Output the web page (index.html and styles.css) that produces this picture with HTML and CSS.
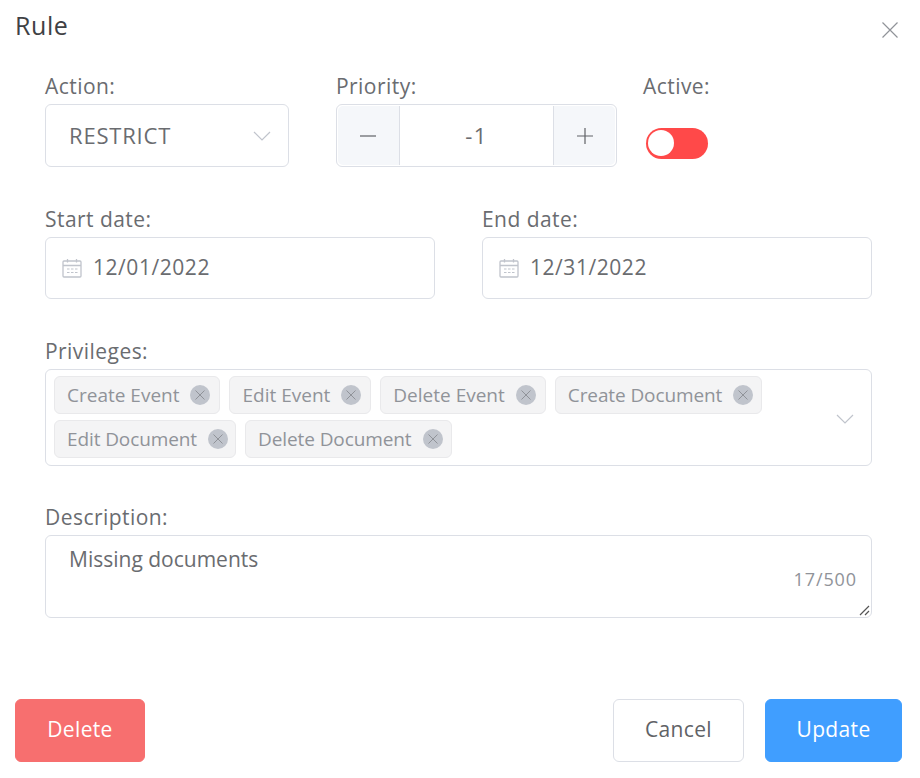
FILE: index.html
```html
<!DOCTYPE html>
<html lang="en">
<head>
<meta charset="utf-8">
<title>Rule</title>
<link rel="stylesheet" href="styles.css">
</head>
<body>
<div class="dialog">
  <header class="dialog-header">
    <span class="dialog-title">Rule</span>
    <button class="close" type="button" aria-label="Close">
      <svg viewBox="0 0 16 16" width="16" height="16"><path d="M.5.5l15 15M15.500.5l-15 15" fill="none" stroke="#909399" stroke-width="1.200"/></svg>
    </button>
  </header>
  <form class="form">
    <div class="row row-top">
      <div class="field action">
        <label class="label">Action:</label>
        <div class="control select">
          <span class="select-value">RESTRICT</span>
          <svg class="chev" viewBox="0 0 18 10" width="18" height="10"><path d="M1 1l8 8 8-8" fill="none" stroke="#c0c4cc" stroke-width="1.200"/></svg>
        </div>
      </div>
      <div class="field priority">
        <label class="label">Priority:</label>
        <div class="control number">
          <span class="step step-l"><svg viewBox="0 0 16 16" width="16" height="16"><path d="M0 8h16" stroke="#606266" stroke-width="1.200"/></svg></span>
          <span class="num">-1</span>
          <span class="step step-r"><svg viewBox="0 0 16 16" width="16" height="16"><path d="M0 8h16M8 0v16" stroke="#606266" stroke-width="1.200"/></svg></span>
        </div>
      </div>
      <div class="field active">
        <label class="label">Active:</label>
        <div class="switch"><span class="knob"></span></div>
      </div>
    </div>
    <div class="row row-dates">
      <div class="field date">
        <label class="label">Start date:</label>
        <div class="control dateinput">
          <svg class="cal" viewBox="0 0 20 20" width="20" height="20"><g fill="none" stroke="#c0c4cc" stroke-width="1.300"><rect x="1" y="3" width="18" height="16" rx="1"/><path d="M1 7.500h18M5.500 1v3.500M14.500 1v3.500"/><path d="M5 11h2.500M9 11h2.500M13 11h2.500M5 14.500h2.500M9 14.500h2.500M13 14.500h2.500" stroke-width="1.100"/></g></svg>
          <span class="date-value">12/01/2022</span>
        </div>
      </div>
      <div class="field date">
        <label class="label">End date:</label>
        <div class="control dateinput">
          <svg class="cal" viewBox="0 0 20 20" width="20" height="20"><g fill="none" stroke="#c0c4cc" stroke-width="1.300"><rect x="1" y="3" width="18" height="16" rx="1"/><path d="M1 7.500h18M5.500 1v3.500M14.500 1v3.500"/><path d="M5 11h2.500M9 11h2.500M13 11h2.500M5 14.500h2.500M9 14.500h2.500M13 14.500h2.500" stroke-width="1.100"/></g></svg>
          <span class="date-value">12/31/2022</span>
        </div>
      </div>
    </div>
    <div class="field block privileges">
      <label class="label">Privileges:</label>
      <div class="control tags">
        <div class="tag-list">
          <span class="tag">Create Event<i class="x"><svg viewBox="0 0 10 10" width="10" height="10"><path d="M.5.500l9 9M9.500.5l-9 9" stroke="#909399" stroke-width="1"/></svg></i></span>
          <span class="tag">Edit Event<i class="x"><svg viewBox="0 0 10 10" width="10" height="10"><path d="M.5.500l9 9M9.500.5l-9 9" stroke="#909399" stroke-width="1"/></svg></i></span>
          <span class="tag">Delete Event<i class="x"><svg viewBox="0 0 10 10" width="10" height="10"><path d="M.5.500l9 9M9.500.5l-9 9" stroke="#909399" stroke-width="1"/></svg></i></span>
          <span class="tag tag-doc">Create Document<i class="x"><svg viewBox="0 0 10 10" width="10" height="10"><path d="M.5.500l9 9M9.500.5l-9 9" stroke="#909399" stroke-width="1"/></svg></i></span>
          <span class="tag tag-doc tag-narrow">Edit Document<i class="x"><svg viewBox="0 0 10 10" width="10" height="10"><path d="M.5.500l9 9M9.500.5l-9 9" stroke="#909399" stroke-width="1"/></svg></i></span>
          <span class="tag tag-doc">Delete Document<i class="x"><svg viewBox="0 0 10 10" width="10" height="10"><path d="M.5.500l9 9M9.500.5l-9 9" stroke="#909399" stroke-width="1"/></svg></i></span>
        </div>
        <svg class="chev chev-tags" viewBox="0 0 18 10" width="18" height="10"><path d="M1 1l8 8 8-8" fill="none" stroke="#c0c4cc" stroke-width="1.200"/></svg>
      </div>
    </div>
    <div class="field block description">
      <label class="label">Description:</label>
      <div class="control textarea">
        <span class="text">Missing documents</span>
        <span class="count">17/500</span>
        <svg class="grip" viewBox="0 0 11 11" width="11" height="11"><path d="M1 10L10 1M6 10l4-4" fill="none" stroke="#555" stroke-width="1.200"/></svg>
      </div>
    </div>
  </form>
  <footer class="footer">
    <button type="button" class="btn btn-delete">Delete</button>
    <div class="footer-right">
      <button type="button" class="btn btn-cancel">Cancel</button>
      <button type="button" class="btn btn-update">Update</button>
    </div>
  </footer>
</div>
</body>
</html>
```

FILE: styles.css
```css
* { box-sizing: border-box; }
html, body { margin: 0; padding: 0; background: #fff; }
body { width: 920px; height: 778px; overflow: hidden; font-family: "Open Sans", "Noto Sans", sans-serif; color: #606266; }
.dialog { display: flex; flex-direction: column; height: 778px; }
.dialog-header { display: flex; justify-content: space-between; padding: 10px 22px 0 15px; height: 65px; }
.dialog-title { font-size: 25px; line-height: 30px; color: #3f4144; letter-spacing: 0.6px; }
.close { border: 0; background: none; padding: 0; margin-top: 12px; width: 16px; height: 16px; display: block; }
.close svg { display: block; }
.form { padding: 0 48px 0 45px; display: flex; flex-direction: column; }
.row { display: flex; }
.row-top { height: 133px; }
.action { width: 244px; margin-right: 47px; }
.priority { width: 281px; margin-right: 26px; }
.active { width: 80px; }
.row-dates { gap: 47px; height: 132px; }
.date { width: 390px; }
.label { display: block; font-size: 21px; line-height: 43px; height: 39px; letter-spacing: 0.45px; white-space: nowrap; color: #6a6c70; }
.control { border: 1px solid #dcdfe6; border-radius: 6px; background: #fff; font-size: 21px; color: #6a6c70; }
.select { height: 63px; display: flex; align-items: center; justify-content: space-between; padding: 0 17px 2px 23px; }
.select-value { font-size: 22px; letter-spacing: 0.8px; }
.chev { margin-top: 2px; }
.number { height: 63px; display: flex; position: relative; }
.step { width: 62px; background: #f5f7fa; display: flex; align-items: center; justify-content: center; margin: 1px; }
.step-l { border-right: 1px solid #dcdfe6; border-radius: 5px 0 0 5px; margin-right: 0; padding-right: 2px; }
.step-r { border-left: 1px solid #dcdfe6; border-radius: 0 5px 5px 0; margin-left: 0; }
.num { flex: 1; text-align: center; line-height: 60px; font-size: 22px; letter-spacing: 1.5px; }
.switch { width: 62px; height: 31px; border-radius: 16px; background: #ff4949; margin: 24px 0 0 3px; padding: 2px; }
.knob { display: block; width: 26px; height: 26px; border-radius: 50%; background: #fff; }
.dateinput { height: 62px; display: flex; align-items: center; padding: 0 0 2px 16px; gap: 11px; }
.date-value { letter-spacing: 0.55px; }
.cal { display: block; margin-top: 2px; }
.block { width: 827px; }
.privileges { height: 166px; }
.tags { height: 97px; display: flex; align-items: center; justify-content: space-between; padding: 0 17px 2px 8px; }
.chev-tags { margin-top: 5px; }
.tag-list { display: flex; flex-wrap: wrap; gap: 6px 9px; width: 760px; }
.tag { height: 38px; display: flex; align-items: center; padding: 0 9px 0 12px; background: #f4f4f5; border: 1px solid #e9e9eb; border-radius: 6px; color: #909399; font-size: 19px; gap: 11px; white-space: nowrap; }
.tag-doc { letter-spacing: -0.1px; padding-right: 8px; }
.tag-narrow { padding-right: 7px; }
.x { width: 20px; height: 20px; border-radius: 50%; background: #c0c4cc; display: flex; align-items: center; justify-content: center; }
.x svg { display: block; }
.textarea { height: 83px; position: relative; padding: 7px 23px; line-height: 32px; }
.count { position: absolute; right: 14px; bottom: 26px; font-size: 18px; line-height: 24px; color: #909399; letter-spacing: 0.9px; }
.grip { position: absolute; right: 1px; bottom: 1px; display: block; }
.footer { margin-top: auto; display: flex; justify-content: space-between; padding: 0 18px 16px 15px; }
.footer-right { display: flex; gap: 21px; }
.btn { height: 63px; border-radius: 6px; border: 1px solid #dcdfe6; background: #fff; color: #606266; font: inherit; font-size: 21px; letter-spacing: 0.35px; padding: 0 0 4px; }
.btn-delete { width: 130px; background: #f76f6f; border-color: #f76f6f; color: #fff; }
.btn-cancel { width: 131px; }
.btn-update { width: 137px; background: #409eff; border-color: #409eff; color: #fff; }
```
